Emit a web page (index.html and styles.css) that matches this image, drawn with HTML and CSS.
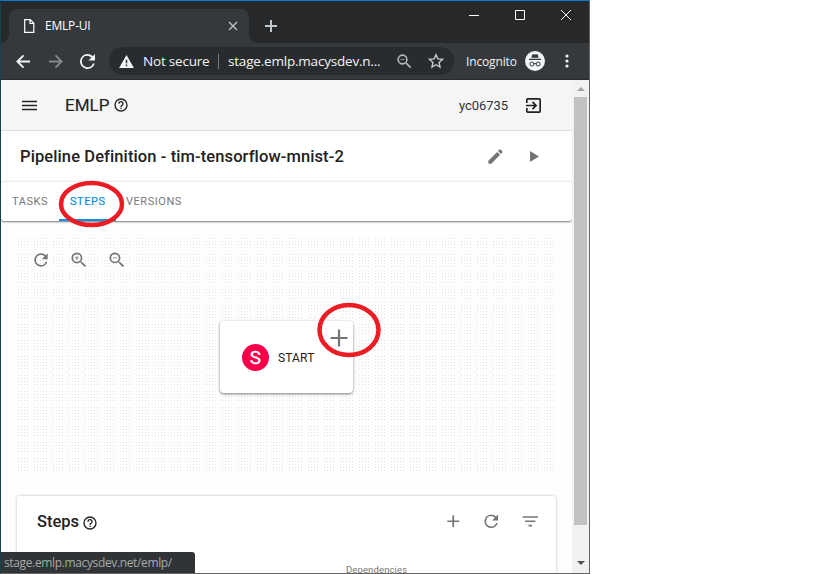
FILE: index.html
```html
<!DOCTYPE html>
<html lang="en">
<head>
<meta charset="utf-8">
<title>EMLP-UI</title>
<link rel="stylesheet" href="styles.css">
</head>
<body>
<svg class="symbols" aria-hidden="true">
  <symbol id="refresh" viewBox="0 0 24 24"><path d="M17.65 6.35A7.96 7.96 0 0 0 12 4a8 8 0 1 0 7.73 10h-2.08A6 6 0 1 1 12 6c1.66 0 3.14.69 4.22 1.78L13 11h7V4z"/></symbol>
  <symbol id="help" viewBox="0 0 24 24"><path d="M11 18h2v-2h-2v2zm1-16a10 10 0 1 0 0 20 10 10 0 0 0 0-20zm0 18a8 8 0 1 1 0-16 8 8 0 0 1 0 16zm0-14a4 4 0 0 0-4 4h2a2 2 0 1 1 4 0c0 2-3 1.750-3 5h2c0-2.250 3-2.500 3-5a4 4 0 0 0-4-4z"/></symbol>
  <symbol id="zoom-out" viewBox="0 0 24 24"><path d="M15.500 14h-.790l-.280-.270A6.500 6.500 0 1 0 13.730 14.430l.270.280v.790l5 4.990L20.490 19zM9.500 14a4.500 4.500 0 1 1 0-9 4.500 4.500 0 0 1 0 9zM7 9h5v1H7z"/></symbol>
  <symbol id="zoom-in" viewBox="0 0 24 24"><path d="M15.500 14h-.790l-.280-.270A6.500 6.500 0 1 0 13.730 14.430l.270.280v.790l5 4.990L20.490 19zM9.500 14a4.500 4.500 0 1 1 0-9 4.500 4.500 0 0 1 0 9zM12 10h-2v2H9v-2H7V9h2V7h1v2h2z"/></symbol>
  <symbol id="plus" viewBox="0 0 24 24"><path d="M19 13h-6v6h-2v-6H5v-2h6V5h2v6h6z"/></symbol>
</svg>
<div class="window">
  <header class="tabstrip">
    <div class="tab">
      <svg class="page-icon" viewBox="0 0 12 14"><path d="M1.700.700h5.500l3.600 3.600v9H1.700zM7 .700v3.800h3.800"/></svg>
      <span class="tab-title">EMLP-UI</span>
      <svg class="tab-close" viewBox="0 0 10 10"><path d="M1 1l8 8M9 1L1 9"/></svg>
    </div>
    <svg class="new-tab" viewBox="0 0 12 12"><path d="M6 0v12M0 6h12"/></svg>
    <div class="controls">
      <svg viewBox="0 0 12 12"><path d="M1 6.500h10"/></svg>
      <svg viewBox="0 0 12 12"><path d="M1.500 1.500h9v9h-9z"/></svg>
      <svg viewBox="0 0 12 12"><path d="M1 1l10 10M11 1L1 11"/></svg>
    </div>
  </header>
  <div class="toolbar">
    <svg class="nav" viewBox="0 0 16 16"><path d="M15 8H2M8 1.500L1.500 8 8 14.500"/></svg>
    <svg class="nav dim" viewBox="0 0 16 16"><path d="M1 8h13M8 1.500L14.500 8 8 14.500"/></svg>
    <svg class="reload" viewBox="4 4 16 16"><use href="#refresh" width="24" height="24"/></svg>
    <div class="omnibox">
      <svg class="warning" viewBox="0 0 16 14"><path fill-rule="evenodd" d="M8 0l8 14H0zM7.200 5v4h1.600V5zm0 5.300v1.700h1.600v-1.700z"/></svg>
      <span class="security">Not secure</span>
      <span class="url">stage.emlp.macysdev.n...</span>
      <svg class="omni-zoom" viewBox="0 0 24 24"><use href="#zoom-out"/></svg>
      <svg class="star" viewBox="0 0 16 16"><path d="M8 1.700l1.900 4.200 4.600.500-3.400 3.100.900 4.500-4-2.300-4 2.300.900-4.500L1.500 6.400l4.600-.500z"/></svg>
    </div>
    <span class="incognito">Incognito</span>
    <svg class="spy" viewBox="0 0 20 20"><circle cx="10" cy="10" r="10" fill="#f1f3f4"/><path fill="#35393c" d="M6.300 6.800l1-3.200q.200-.500.700-.400l2 .400 2-.400q.500-.100.700.400l1 3.200zM4 7.700h12v1.200H4z"/><g fill="none" stroke="#35393c" stroke-width="1"><circle cx="6.900" cy="13" r="2"/><circle cx="13.100" cy="13" r="2"/><path d="M8.900 12.800q1.100-.700 2.200 0"/></g></svg>
    <svg class="dots" viewBox="0 0 4 14"><circle cx="2" cy="2" r="1.600"/><circle cx="2" cy="7" r="1.600"/><circle cx="2" cy="12" r="1.600"/></svg>
  </div>
  <div class="viewport">
    <main class="page">
      <div class="appbar">
        <svg class="menu" viewBox="0 0 15 11"><path d="M0 1.500h15M0 5.500h15M0 9.500h15"/></svg>
        <h1>EMLP</h1>
        <svg class="app-help" viewBox="0 0 24 24"><use href="#help"/></svg>
        <span class="user">yc06735</span>
        <svg class="exit" viewBox="3 3 18 18"><path d="M10.090 15.590L11.500 17l5-5-5-5-1.410 1.410L12.670 11H3v2h9.670zM19 3H5a2 2 0 0 0-2 2v4h2V5h14v14H5v-4H3v4a2 2 0 0 0 2 2h14a2 2 0 0 0 2-2V5a2 2 0 0 0-2-2z"/></svg>
      </div>
      <div class="titlebar">
        <h2>Pipeline Definition - tim-tensorflow-mnist-2</h2>
        <svg class="edit" viewBox="0 0 24 24"><path d="M3 17.250V21h3.750L17.810 9.940l-3.750-3.750zM20.710 7.040a1 1 0 0 0 0-1.410l-2.340-2.340a1 1 0 0 0-1.410 0l-1.830 1.830 3.750 3.750z"/></svg>
        <svg class="play" viewBox="0 0 10 12"><path d="M0 0v12l10-6z"/></svg>
      </div>
      <nav class="tabs">
        <span class="tasks">TASKS</span><span class="steps">STEPS</span><span class="versions">VERSIONS</span>
      </nav>
      <section class="canvas">
        <svg class="grid" width="538" height="236">
          <defs><pattern id="dots" width="51" height="51" patternUnits="userSpaceOnUse">
            <path class="dot-row" d="M1 1.500h51M1 4.500h51M1 7.500h51M1 10.500h51M1 17.500h51M1 20.500h51M1 23.500h51M1 26.500h51M1 29.500h51M1 36.500h51M1 39.500h51M1 42.500h51M1 45.500h51"/>
            <path class="dot-row faint" d="M1 13.500h51M1 33.500h51M1 49.500h51"/>
            <path class="dot-col" d="M14.500 1v50M33.500 1v50M49.500 1v50"/>
          </pattern></defs>
          <rect width="538" height="236" fill="url(#dots)"/>
        </svg>
        <div class="tools">
          <svg viewBox="0 0 24 24"><use href="#refresh"/></svg>
          <svg viewBox="0 0 24 24"><use href="#zoom-in"/></svg>
          <svg viewBox="0 0 24 24"><use href="#zoom-out"/></svg>
        </div>
        <div class="node">
          <span class="badge">S</span><span class="node-name">START</span>
          <svg class="node-add" viewBox="0 0 18 18"><path d="M9 .500v17M.500 9h17"/></svg>
        </div>
      </section>
      <section class="card">
        <div class="card-head">
          <h2>Steps</h2>
          <svg class="card-help" viewBox="0 0 24 24"><use href="#help"/></svg>
          <div class="actions">
            <svg viewBox="0 0 24 24"><use href="#plus"/></svg>
            <svg viewBox="0 0 24 24"><use href="#refresh"/></svg>
            <svg viewBox="0 0 24 24"><path d="M10 18h4v-2h-4zM3 6v2h18V6zm3 7h12v-2H6z"/></svg>
          </div>
        </div>
        <div class="column-name">Dependencies</div>
      </section>
    </main>
    <div class="scrollbar">
      <svg viewBox="0 0 8 4"><path fill="#a3a3a3" d="M0 4l4-4 4 4z"/></svg>
      <div class="thumb"></div>
      <svg viewBox="0 0 8 4"><path fill="#505050" d="M0 0l4 4 4-4z"/></svg>
    </div>
  </div>
  <div class="status">stage.emlp.macysdev.net/emlp/</div>
</div>
<svg class="marks" width="819" height="574" viewBox="0 0 819 574"><ellipse cx="91.500" cy="204" rx="30.500" ry="21"/><ellipse cx="349" cy="330" rx="29.500" ry="25"/></svg>
</body>
</html>
```
FILE: styles.css
```css
* { box-sizing: border-box; }
body { margin: 0; width: 819px; height: 574px; overflow: hidden; background: #fff; font-family: Roboto, sans-serif; position: relative; }
svg { display: block; flex: none; fill: currentColor; }
h1, h2 { margin: 0; font-weight: 500; white-space: nowrap; }
span { white-space: nowrap; flex: none; }
.symbols { position: absolute; width: 0; height: 0; }
.window { position: relative; width: 590px; height: 574px; display: flex; flex-direction: column; border: solid #666; border-width: 0 1px 1px; border-left-color: #17404e; border-top: 1px solid #0a7dd3; background: #fff; }
.tabstrip { height: 42px; background: #27282a; display: flex; color: #fff; font-family: "Open Sans", sans-serif; flex: none; }
.tab { width: 240px; height: 34px; margin: 8px 0 0 8px; padding: 0 11px 0 14px; background: #35393c; border-radius: 8px 8px 0 0; display: flex; align-items: center; position: relative; }
.tab::before, .tab::after { content: ""; position: absolute; bottom: 0; width: 8px; height: 8px; }
.tab::before { left: -8px; background: radial-gradient(circle at 0 0, transparent 7.5px, #35393c 8px); }
.tab::after { right: -8px; background: radial-gradient(circle at 100% 0, transparent 7.5px, #35393c 8px); }
.page-icon { width: 12px; height: 14px; fill: none; stroke: #fff; stroke-width: 1.2; }
.tab-title { font-size: 12px; letter-spacing: -.2px; margin: -2px 0 0 10px; }
.tab-close { width: 10px; height: 10px; margin-left: auto; stroke: #bfc2c5; stroke-width: 1.4; }
.new-tab { width: 12px; height: 12px; margin: 19px 0 0 16px; stroke: #c3c6c9; stroke-width: 2; }
.controls { display: flex; gap: 34px; margin: 8px 17px 0 auto; }
.controls svg { width: 12px; height: 12px; fill: none; stroke: #fff; stroke-width: 1; }
.toolbar { height: 37px; flex: none; background: #35393c; border-bottom: 1px solid #292b2e; display: flex; align-items: center; color: #f1f3f4; font-family: "Open Sans", sans-serif; padding-left: 15px; }
.nav { width: 15px; height: 15px; fill: none; stroke: currentColor; stroke-width: 2; }
.nav + .nav { margin-left: 17px; }
.dim { color: #85898c; }
.reload { width: 15px; height: 15px; margin-left: 17px; }
.omnibox { width: 345px; height: 28px; margin-left: 14px; padding-left: 10px; border-radius: 14px; background: #292c2f; display: flex; align-items: center; }
.warning { width: 15px; height: 13px; }
.security { width: 75px; margin-left: 9px; font-size: 13.5px; letter-spacing: -.2px; }
.url { width: 160px; margin-left: 0; padding-left: 9px; border-left: 1px solid #777b7e; line-height: 15px; font-size: 13.5px; letter-spacing: -.2px; }
.omni-zoom { width: 19px; height: 19px; margin-left: 17px; color: #b4b7ba; }
.star { width: 16px; height: 16px; margin-left: 14px; fill: none; stroke: #c8cbce; stroke-width: 1.4; }
.incognito { width: 52px; margin-left: 12px; font-size: 12px; letter-spacing: -.15px; }
.spy { width: 20px; height: 20px; margin-left: 7px; }
.dots { width: 4px; height: 14px; margin-left: 20px; }
.viewport { flex: 1; min-height: 0; display: flex; }
.page { width: 571px; overflow: hidden; background: #fefefe; color: #222; }
.appbar { height: 51px; background: #f5f5f5; border-bottom: 1px solid #dedede; display: flex; align-items: center; padding: 0 31px 0 21px; }
.menu { width: 15px; height: 11px; stroke: #222; stroke-width: 1.7; }
.appbar h1 { width: 44px; margin-left: 28px; font-size: 17px; font-weight: 400; -webkit-text-stroke: .15px; }
.app-help { width: 16px; height: 16px; margin-left: 4px; }
.user { margin-left: auto; font-size: 13px; letter-spacing: -.05px; color: #333; }
.exit { width: 15px; height: 15px; margin-left: 18px; }
.titlebar { height: 50px; background: #fff; display: flex; align-items: center; padding-left: 19px; }
.titlebar h2 { width: 466px; font-size: 16.5px; letter-spacing: .1px; }
.edit { width: 19px; height: 19px; color: #757575; }
.play { width: 9px; height: 11px; margin-left: 25px; color: #757575; }
.tabs { height: 40px; background: #fff; border-top: 1px solid #eee; border-radius: 3px; box-shadow: 0 1px 2px #777; display: flex; font-size: 11px; line-height: 39px; letter-spacing: .55px; color: #777; }
.tasks { width: 58px; padding-left: 11px; }
.steps { width: 57px; padding-left: 11px; color: #0c8ddd; border-bottom: 2px solid #0c91e4; -webkit-text-stroke: .2px; }
.versions { padding-left: 10px; }
.canvas { width: 538px; height: 236px; margin: 16px 0 0 16px; position: relative; }
.grid { position: absolute; inset: 0; }
.dot-row { stroke: #e2e2e2; stroke-dasharray: 1 2 1 2 1 2 1 6 1 2 1 2 1 2 1 2 1 6 1 2 1 2 1 2 1 6; fill: none; }
.dot-row.faint { stroke: #f6f6f6; }
.dot-col { stroke: #f6f6f6; stroke-dasharray: 1 2; fill: none; }
.tools { position: absolute; left: 14px; top: 13px; display: flex; gap: 18px; color: #757575; }
.tools svg { width: 20px; height: 20px; }
.node { position: absolute; left: 203px; top: 84px; width: 133px; height: 72px; background: #fff; border-radius: 4px; box-shadow: 0 1px 3px rgba(0,0,0,.5); display: flex; align-items: center; padding-left: 22px; }
.badge { width: 27px; height: 27px; border-radius: 50%; background: #fa004b; color: #fff; text-align: center; line-height: 27px; font-size: 19px; -webkit-text-stroke: .3px; }
.node-name { margin: 2px 0 0 9px; font-size: 12px; letter-spacing: .15px; }
.node-add { position: absolute; width: 18px; height: 18px; left: 110px; top: 8px; stroke: #757575; stroke-width: 2.2; }
.card { width: 539px; height: 90px; margin: 23px 0 0 16px; background: #fff; border-radius: 3px; box-shadow: 0 0 3px rgba(0,0,0,.28); }
.card-head { height: 51px; display: flex; align-items: center; padding: 0 16px 0 20px; }
.card h2 { font-size: 16.5px; width: 45px; }
.card-help { width: 16px; height: 16px; margin: 3px 0 0 0; }
.actions { margin-left: auto; display: flex; gap: 18px; color: #757575; }
.actions svg { width: 20.500px; height: 20.500px; }
.column-name { margin: 16px 0 0 329px; font-size: 9.5px; line-height: 14px; letter-spacing: .12px; color: #777; }
.scrollbar { width: 17px; background: #f1f1f1; display: flex; flex-direction: column; align-items: center; padding: 7px 0 8px; }
.scrollbar svg { width: 8px; height: 4px; }
.thumb { width: 13px; height: 428px; margin: 6px 0 auto; background: #c1c1c1; }
.status { position: absolute; left: 0; bottom: 0; width: 194px; height: 21px; padding-left: 3px; border-radius: 0 3px 0 0; background: #313437; color: #a5aaad; font: 12px/21px "Open Sans", sans-serif; letter-spacing: -.36px; white-space: nowrap; }
.marks { position: absolute; inset: 0; fill: none; stroke: #ed1c24; stroke-width: 4.500; }
```
